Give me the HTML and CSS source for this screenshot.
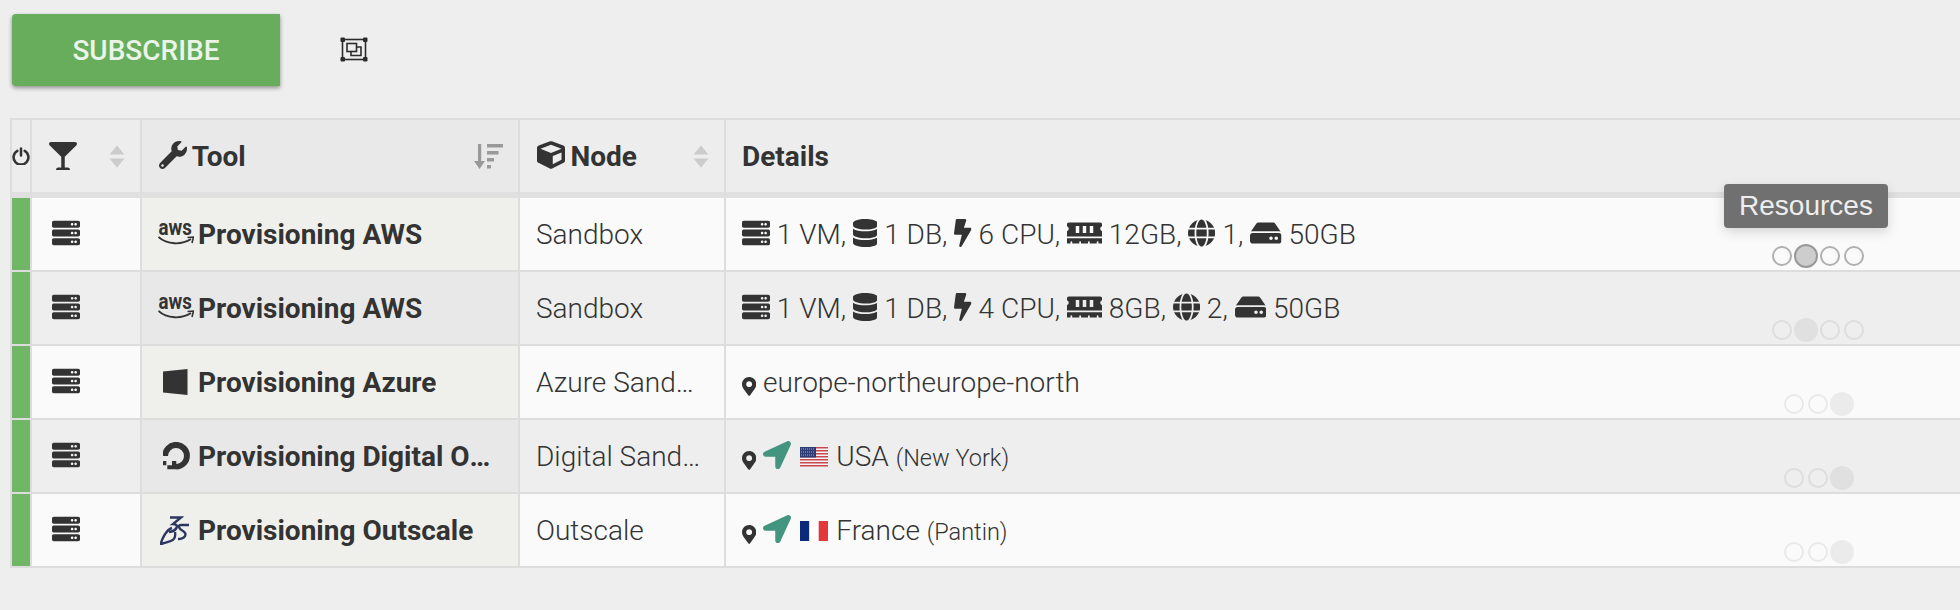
FILE: index.html
```html
<!DOCTYPE html>
<html lang="en">
<head>
<meta charset="UTF-8">
<meta name="viewport" content="width=device-width, initial-scale=1.0">
<title>Tools</title>
<link rel="stylesheet" href="styles.css">
</head>
<body>
<svg class="sprite" xmlns="http://www.w3.org/2000/svg">
    <symbol id="i-server" viewBox="0 0 512 512"><path d="M480 160H32c-17.673 0-32-14.327-32-32V64c0-17.673 14.327-32 32-32h448c17.673 0 32 14.327 32 32v64c0 17.673-14.327 32-32 32zm-48-88c-13.255 0-24 10.745-24 24s10.745 24 24 24 24-10.745 24-24-10.745-24-24-24zm-64 0c-13.255 0-24 10.745-24 24s10.745 24 24 24 24-10.745 24-24-10.745-24-24-24zm112 248H32c-17.673 0-32-14.327-32-32v-64c0-17.673 14.327-32 32-32h448c17.673 0 32 14.327 32 32v64c0 17.673-14.327 32-32 32zm-48-88c-13.255 0-24 10.745-24 24s10.745 24 24 24 24-10.745 24-24-10.745-24-24-24zm-64 0c-13.255 0-24 10.745-24 24s10.745 24 24 24 24-10.745 24-24-10.745-24-24-24zm112 248H32c-17.673 0-32-14.327-32-32v-64c0-17.673 14.327-32 32-32h448c17.673 0 32 14.327 32 32v64c0 17.673-14.327 32-32 32zm-48-88c-13.255 0-24 10.745-24 24s10.745 24 24 24 24-10.745 24-24-10.745-24-24-24zm-64 0c-13.255 0-24 10.745-24 24s10.745 24 24 24 24-10.745 24-24-10.745-24-24-24z"/></symbol>
    <symbol id="i-db" viewBox="0 0 448 512"><path d="M448 73.143v45.714C448 159.143 347.667 192 224 192S0 159.143 0 118.857V73.143C0 32.857 100.333 0 224 0s224 32.857 224 73.143zM448 176v102.857C448 319.143 347.667 352 224 352S0 319.143 0 278.857V176c48.125 33.143 136.208 48.572 224 48.572S399.874 209.143 448 176zm0 160v102.857C448 479.143 347.667 512 224 512S0 479.143 0 438.857V336c48.125 33.143 136.208 48.572 224 48.572S399.874 369.143 448 336z"/></symbol>
    <symbol id="i-bolt" viewBox="0 0 320 512"><path d="M296 160H180.6l42.6-129.8C227.2 15 215.7 0 200 0H56C44 0 33.8 8.9 32.2 20.8l-32 240C-1.7 275.2 9.5 288 24 288h118.7L96.6 482.5c-3.6 15.2 8 29.5 23.3 29.5 8.4 0 16.4-4.4 20.8-12l176-304c9.3-15.9-2.2-36-20.7-36z"/></symbol>
    <symbol id="i-memory" viewBox="0 0 640 512"><path d="M640 130.94V96c0-17.67-14.33-32-32-32H32C14.33 64 0 78.33 0 96v34.94c18.6 6.61 32 24.19 32 45.06s-13.4 38.45-32 45.06V320h640v-98.94c-18.6-6.61-32-24.19-32-45.06s13.4-38.45 32-45.06zM224 256h-64V128h64v128zm128 0h-64V128h64v128zm128 0h-64V128h64v128zM0 448h64v-26.67c0-8.84 7.16-16 16-16s16 7.16 16 16V448h128v-26.67c0-8.84 7.16-16 16-16s16 7.16 16 16V448h128v-26.67c0-8.84 7.16-16 16-16s16 7.16 16 16V448h128v-26.67c0-8.84 7.16-16 16-16s16 7.16 16 16V448h64v-96H0v96z"/></symbol>
    <symbol id="i-globe" viewBox="0 0 496 512"><path d="M336.5 160C322 70.7 287.8 8 248 8s-74 62.7-88.5 152h177zM152 256c0 22.2 1.2 43.5 3.3 64h185.3c2.1-20.5 3.3-41.8 3.3-64s-1.2-43.5-3.3-64H155.3c-2.1 20.5-3.3 41.8-3.3 64zm324.7-96c-28.6-67.9-86.5-120.4-158-141.6 24.4 33.8 41.2 84.7 50 141.6h108zM177.2 18.4C105.8 39.6 47.8 92.1 19.3 160h108c8.7-56.9 25.5-107.8 49.9-141.6zM487.4 192H372.7c2.1 21 3.3 42.5 3.3 64s-1.2 43-3.3 64h114.6c5.5-20.5 8.6-41.8 8.6-64s-3.1-43.5-8.5-64zM120 256c0-21.5 1.2-43 3.3-64H8.6C3.2 212.5 0 233.8 0 256s3.2 43.5 8.6 64h114.6c-2-21-3.2-42.5-3.2-64zm39.5 96c14.5 89.3 48.7 152 88.5 152s74-62.7 88.5-152h-177zm159.3 141.6c71.4-21.2 129.4-73.7 158-141.6h-108c-8.8 56.9-25.6 107.8-50 141.6zM19.3 352c28.6 67.9 86.5 120.4 158 141.6-24.4-33.8-41.2-84.7-50-141.6h-108z"/></symbol>
    <symbol id="i-hdd" viewBox="0 0 576 512"><path d="M576 304v96c0 26.51-21.49 48-48 48H48c-26.51 0-48-21.49-48-48v-96c0-26.51 21.49-48 48-48h480c26.51 0 48 21.49 48 48zm-48-80a79.557 79.557 0 0 1 30.777 6.165L462.25 85.374A48.003 48.003 0 0 0 422.311 64H153.689a48 48 0 0 0-39.938 21.374L17.223 230.165A79.557 79.557 0 0 1 48 224h480zm-48 96c-17.673 0-32 14.327-32 32s14.327 32 32 32 32-14.327 32-32-14.327-32-32-32zm-96 0c-17.673 0-32 14.327-32 32s14.327 32 32 32 32-14.327 32-32-14.327-32-32-32z"/></symbol>
    <symbol id="i-marker" viewBox="0 0 384 512"><path d="M172.268 501.67C26.97 291.031 0 269.413 0 192 0 85.961 85.961 0 192 0s192 85.961 192 192c0 77.413-26.97 99.031-172.268 309.67-9.535 13.774-29.93 13.773-39.464 0zM192 272c44.183 0 80-35.817 80-80s-35.817-80-80-80-80 35.817-80 80 35.817 80 80 80z"/></symbol>
    <symbol id="i-arrow" viewBox="0 0 512 512"><path d="M444.52 3.52L28.74 195.42c-47.97 22.39-31.98 92.75 19.19 92.75h175.91v175.91c0 51.17 70.36 67.17 92.75 19.19l191.9-415.78c15.99-38.39-25.59-79.97-63.97-63.97z"/></symbol>
    <symbol id="i-glass" viewBox="0 0 512 512"><path d="M502.05 57.6C523.3 36.34 508.25 0 478.2 0H33.8C3.75 0-11.3 36.34 9.95 57.6L224 271.64V464h-56c-22.09 0-40 17.91-40 40 0 4.42 3.58 8 8 8h240c4.42 0 8-3.58 8-8 0-22.09-17.91-40-40-40h-56V271.64L502.05 57.6z"/></symbol>
    <symbol id="i-wrench" viewBox="0 0 512 512"><path d="M507.73 109.1c-2.24-9.03-13.54-12.09-20.12-5.51l-74.36 74.36-67.88-11.31-11.31-67.88 74.36-74.36c6.62-6.62 3.43-17.9-5.66-20.16-47.38-11.74-99.55.91-136.58 37.93-39.64 39.64-50.55 97.1-34.05 147.2L18.74 402.76c-24.99 24.99-24.99 65.51 0 90.5 24.99 24.99 65.51 24.99 90.5 0l213.21-213.21c50.12 16.71 107.47 5.68 147.37-34.22 37.07-37.07 49.7-89.32 37.91-136.73zM64 472c-13.25 0-24-10.75-24-24 0-13.26 10.75-24 24-24s24 10.74 24 24c0 13.25-10.75 24-24 24z"/></symbol>
    <symbol id="i-cube" viewBox="0 0 512 512"><path d="M239.1 6.3l-208 78c-18.7 7-31.1 25-31.1 45v225.1c0 18.2 10.3 34.8 26.5 42.9l208 104c13.5 6.8 29.4 6.8 42.9 0l208-104c16.3-8.1 26.5-24.8 26.5-42.9V129.3c0-20-12.4-37.9-31.1-44.9l-208-78C262 2.2 250 2.2 239.1 6.3zM256 68.4l192 72v1.1l-192 78-192-78v-1.1l192-72zm32 356V275.5l160-65v133.9l-160 80z"/></symbol>
    <symbol id="i-sort" viewBox="0 0 16 23"><path d="M8 0.5 15.5 9.5H0.5zM8 22.5 0.5 13.5H15.5z" stroke-linejoin="round"/></symbol>
    <symbol id="i-sort-down" viewBox="0 0 29 25"><path d="M4 0h3.2v17H11L5.6 25 0 17h4zM13 0h16v3.4H13zM13 7h11.5v3.4H13zM13 14h7v3.4h-7zM13 21h4v3.4h-4z"/></symbol>
</svg>

<div class="toolbar">
    <button class="subscribe">Subscribe</button>
    <svg class="select-icon" viewBox="0 0 28 25" fill="none" stroke="#2b2b2b" stroke-width="1.6">
        <rect x="2.5" y="2.5" width="23" height="20"/>
        <rect x="7" y="6.5" width="9.5" height="8"/>
        <path d="M16.5 10H21V18.5H11V14.5"/>
        <g fill="#2b2b2b" stroke="none">
            <rect x="0.5" y="0.5" width="4.5" height="4.5" rx="1"/>
            <rect x="23" y="0.5" width="4.5" height="4.5" rx="1"/>
            <rect x="0.5" y="20" width="4.5" height="4.5" rx="1"/>
            <rect x="23" y="20" width="4.5" height="4.5" rx="1"/>
        </g>
    </svg>
</div>

<table class="tools">
    <colgroup>
        <col class="col-state">
        <col class="col-type">
        <col class="col-tool">
        <col class="col-node">
        <col>
    </colgroup>
    <thead>
        <tr>
            <th class="state-head">
                <svg class="power" viewBox="0 0 17 17" fill="none" stroke="#333" stroke-width="2.4" stroke-linecap="round"><path d="M5 3.6A7 7 0 1 0 12 3.6M8.5 1.4V8"/></svg>
            </th>
            <th>
                <div class="head-cell">
                    <svg class="fa"><use href="#i-glass"/></svg>
                    <svg class="sort"><use href="#i-sort"/></svg>
                </div>
            </th>
            <th class="sorted">
                <div class="head-cell">
                    <span class="head-label"><svg class="fa"><use href="#i-wrench"/></svg> Tool</span>
                    <svg class="sort-active"><use href="#i-sort-down"/></svg>
                </div>
            </th>
            <th>
                <div class="head-cell">
                    <span class="head-label"><svg class="fa"><use href="#i-cube"/></svg> Node</span>
                    <svg class="sort"><use href="#i-sort"/></svg>
                </div>
            </th>
            <th class="details-head">Details</th>
        </tr>
    </thead>
    <tbody>
        <tr>
            <td class="state"></td>
            <td class="type"><svg class="fa"><use href="#i-server"/></svg></td>
            <td class="tool">
                <div class="tool-cell">
                    <span class="logo">
                        <svg class="logo-aws" viewBox="0 -9 36 42"><text transform="translate(0.5 13) scale(0.85 1)">aws</text><path d="M0.5 15C9 23 24 23 33 17" fill="none" stroke="#333" stroke-width="1.8"/><path d="M29.5 15.5 35.5 15 34 21" fill="none" stroke="#333" stroke-width="1.6"/></svg>
                    </span>
                    <span class="tool-name">Provisioning AWS</span>
                </div>
            </td>
            <td class="node"><div class="clip">Sandbox</div></td>
            <td class="details">
                <div class="details-row">
                    <div class="details-text"><svg class="fa"><use href="#i-server"/></svg> 1 VM, <svg class="fa fa-db"><use href="#i-db"/></svg> 1 DB, <svg class="fa fa-bolt"><use href="#i-bolt"/></svg> 6 CPU, <svg class="fa fa-memory"><use href="#i-memory"/></svg> 12GB, <svg class="fa fa-globe"><use href="#i-globe"/></svg> 1, <svg class="fa fa-hdd"><use href="#i-hdd"/></svg> 50GB</div>
                    <div class="dots dots-on">
                        <span class="slot"><i class="dot"></i></span>
                        <span class="slot slot-tip"><i class="dot dot-active"></i><span class="tooltip">Resources</span></span>
                        <span class="slot"><i class="dot"></i></span>
                        <span class="slot"><i class="dot"></i></span>
                    </div>
                </div>
            </td>
        </tr>
        <tr>
            <td class="state"></td>
            <td class="type"><svg class="fa"><use href="#i-server"/></svg></td>
            <td class="tool">
                <div class="tool-cell">
                    <span class="logo">
                        <svg class="logo-aws" viewBox="0 -9 36 42"><text transform="translate(0.5 13) scale(0.85 1)">aws</text><path d="M0.5 15C9 23 24 23 33 17" fill="none" stroke="#333" stroke-width="1.8"/><path d="M29.5 15.5 35.5 15 34 21" fill="none" stroke="#333" stroke-width="1.6"/></svg>
                    </span>
                    <span class="tool-name">Provisioning AWS</span>
                </div>
            </td>
            <td class="node"><div class="clip">Sandbox</div></td>
            <td class="details">
                <div class="details-row">
                    <div class="details-text"><svg class="fa"><use href="#i-server"/></svg> 1 VM, <svg class="fa fa-db"><use href="#i-db"/></svg> 1 DB, <svg class="fa fa-bolt"><use href="#i-bolt"/></svg> 4 CPU, <svg class="fa fa-memory"><use href="#i-memory"/></svg> 8GB, <svg class="fa fa-globe"><use href="#i-globe"/></svg> 2, <svg class="fa fa-hdd"><use href="#i-hdd"/></svg> 50GB</div>
                    <div class="dots">
                        <span class="slot"><i class="dot"></i></span>
                        <span class="slot"><i class="dot dot-active"></i></span>
                        <span class="slot"><i class="dot"></i></span>
                        <span class="slot"><i class="dot"></i></span>
                    </div>
                </div>
            </td>
        </tr>
        <tr>
            <td class="state"></td>
            <td class="type"><svg class="fa"><use href="#i-server"/></svg></td>
            <td class="tool">
                <div class="tool-cell">
                    <span class="logo">
                        <svg class="logo-img" viewBox="1 0 28 28"><path d="M0 3.5 25.5 1V27L0 24.5z" fill="#333"/></svg>
                    </span>
                    <span class="tool-name">Provisioning Azure</span>
                </div>
            </td>
            <td class="node"><div class="clip">Azure Sandbox</div></td>
            <td class="details">
                <div class="details-row">
                    <div class="details-text"><svg class="fa-pin"><use href="#i-marker"/></svg> europe-northeurope-north</div>
                    <div class="dots">
                        <span class="slot"><i class="dot"></i></span>
                        <span class="slot"><i class="dot"></i></span>
                        <span class="slot"><i class="dot dot-active"></i></span>
                    </div>
                </div>
            </td>
        </tr>
        <tr>
            <td class="state"></td>
            <td class="type"><svg class="fa"><use href="#i-server"/></svg></td>
            <td class="tool">
                <div class="tool-cell">
                    <span class="logo">
                        <svg class="logo-img" viewBox="1 0 28 28"><path d="M14.3 27.5V22A8 8 0 1 0 6 14H0.3A13.8 13.8 0 1 1 14.3 27.5zM10 19H14.3V27.3H10zM5.3 23.3H10V27.3H5.3zM0 19H4.3V23.3H0z" fill="#333"/></svg>
                    </span>
                    <span class="tool-name">Provisioning Digital Ocean</span>
                </div>
            </td>
            <td class="node"><div class="clip">Digital Sandbox</div></td>
            <td class="details">
                <div class="details-row">
                    <div class="details-text"><svg class="fa-pin"><use href="#i-marker"/></svg> <svg class="fa fa-arrow"><use href="#i-arrow"/></svg> <svg class="flag" viewBox="0 0 28 20"><rect width="28" height="20" fill="#f4f4f4"/><path d="M0 0h28v1.5H0zM0 3h28v1.5H0zM0 6h28v1.5H0zM0 9h28v1.5H0zM0 12h28v1.5H0zM0 15h28v1.5H0zM0 18h28v1.5H0z" fill="#c8474f"/><rect width="16" height="10.5" fill="#2f3b74"/><path d="M1 2h14M1 5h14M1 8h14" stroke="#aab" stroke-width="1" stroke-dasharray="1 1"/></svg> USA <small>(New York)</small></div>
                    <div class="dots">
                        <span class="slot"><i class="dot"></i></span>
                        <span class="slot"><i class="dot"></i></span>
                        <span class="slot"><i class="dot dot-active"></i></span>
                    </div>
                </div>
            </td>
        </tr>
        <tr>
            <td class="state"></td>
            <td class="type"><svg class="fa"><use href="#i-server"/></svg></td>
            <td class="tool">
                <div class="tool-cell">
                    <span class="logo">
                        <svg class="logo-3ds" viewBox="0 0 30 30" fill="none" stroke="#2c3660" stroke-width="2.4"><path d="M10 2.5H21L13 9C20 9 17 16 9 17"/><path d="M29 10H21C17 10 19 14 23 16 28 19 25 24 18 24"/><path d="M12 13C6 15 2 24 0.5 29.5 7 26 17 28 15 17"/></svg>
                    </span>
                    <span class="tool-name">Provisioning Outscale</span>
                </div>
            </td>
            <td class="node"><div class="clip">Outscale</div></td>
            <td class="details">
                <div class="details-row">
                    <div class="details-text"><svg class="fa-pin"><use href="#i-marker"/></svg> <svg class="fa fa-arrow"><use href="#i-arrow"/></svg> <svg class="flag" viewBox="0 0 28 20"><rect width="9.4" height="20" fill="#0b2a7c"/><rect x="9.4" width="9.3" height="20" fill="#fff"/><rect x="18.7" width="9.3" height="20" fill="#e3373c"/></svg> France <small>(Pantin)</small></div>
                    <div class="dots">
                        <span class="slot"><i class="dot"></i></span>
                        <span class="slot"><i class="dot"></i></span>
                        <span class="slot"><i class="dot dot-active"></i></span>
                    </div>
                </div>
            </td>
        </tr>
    </tbody>
</table>
</body>
</html>
```

FILE: styles.css
```css
html {
    overflow: hidden;
}
body {
    margin: 0;
    padding: 14px 0 0 0;
    background-color: #eeeeee;
    color: #333;
    font-family: Roboto, "Liberation Sans", sans-serif;
    font-size: 28px;
    overflow: hidden;
}
.sprite {
    display: none;
}
.toolbar {
    display: flex;
    align-items: center;
    height: 72px;
    margin-left: 12px;
    margin-bottom: 32px;
}
.subscribe {
    width: 268px;
    height: 72px;
    margin-right: 60px;
    border: none;
    border-radius: 4px 0 0 4px;
    background-color: #67ad5b;
    box-shadow: 0 2px 4px rgba(0, 0, 0, 0.4);
    color: #eaf4e8;
    font-family: Roboto, sans-serif;
    font-size: 28px;
    font-weight: 500;
    text-transform: uppercase;
}
.select-icon {
    width: 28px;
    height: 25px;
    margin-top: -1px;
}
.tools {
    width: 1960px;
    margin-left: 10px;
    border-collapse: separate;
    border-spacing: 0;
    border-top: 2px solid #ddd;
    border-left: 2px solid #ddd;
    table-layout: fixed;
}
.col-state { width: 20px; }
.col-type { width: 110px; }
.col-tool { width: 378px; }
.col-node { width: 206px; }
th {
    box-sizing: border-box;
    height: 78px;
    padding: 0 15px 0 17px;
    border-right: 2px solid #ddd;
    border-bottom: 6px solid #e0e0e0;
    background-color: #ededed;
    font-weight: 700;
    text-align: left;
}
th.sorted {
    background-color: #e9e9e9;
}
th.state-head {
    padding: 0;
    text-align: right;
}
th.details-head {
    padding-left: 16px;
    border-right: none;
}
.head-cell {
    display: flex;
    justify-content: space-between;
    align-items: center;
}
.head-label {
    word-spacing: -1.5px;
}
.power {
    display: block;
    width: 18px;
    height: 18px;
}
.fa {
    width: 1em;
    height: 1em;
    fill: #333;
    vertical-align: -0.14em;
}
.fa-db { width: 0.875em; }
.fa-bolt { width: 0.625em; }
.fa-memory { width: 1.25em; }
.fa-globe { width: 0.97em; }
.fa-hdd { width: 1.125em; }
.fa-arrow { fill: #44957f; }
.fa-pin {
    width: 14.3px;
    height: 19px;
    fill: #333;
    vertical-align: -0.17em;
}
.sort {
    width: 16px;
    height: 23px;
    fill: #ccc;
}
.sort-active {
    width: 29px;
    height: 25px;
    fill: #999;
}
.flag {
    width: 28px;
    height: 20px;
    margin: 0 1px 0 2.5px;
    vertical-align: -1px;
}
td {
    box-sizing: border-box;
    height: 74px;
    padding: 0 15px 0 16px;
    border-right: 2px solid #ddd;
    border-bottom: 2px solid #ddd;
    background-color: #fafafa;
    font-weight: 300;
}
tbody tr:nth-child(even) td {
    background-color: #eeeeee;
}
td.state,
tbody tr:nth-child(even) td.state {
    padding: 0;
    background-color: #70b765;
}
td.type {
    padding: 0 0 0 20px;
}
td.tool {
    padding: 0 17px 0 17px;
    background-color: #eff0eb;
    font-weight: 700;
}
tbody tr:nth-child(even) td.tool {
    background-color: #e8e8e8;
}
.tool-cell {
    display: flex;
    align-items: center;
}
.logo {
    display: flex;
    flex: none;
    justify-content: center;
    align-items: center;
    width: 36px;
    margin-right: 3px;
}
.logo-aws {
    flex: none;
    width: 36px;
    height: 42px;
    margin-left: -2px;
}
.logo-aws text {
    fill: #333;
    font-family: Roboto, sans-serif;
    font-size: 22px;
    font-weight: 700;
}
.logo-img {
    flex: none;
    width: 28px;
    height: 28px;
}
.logo-3ds {
    flex: none;
    width: 30px;
    height: 30px;
    margin-left: -4px;
}
.tool-name,
.clip {
    overflow: hidden;
    white-space: nowrap;
    text-overflow: ellipsis;
}
td.details {
    padding: 0;
    border-right: none;
}
.details-row {
    display: flex;
    justify-content: space-between;
    height: 72px;
}
.details-text {
    align-self: center;
    padding-left: 16px;
    white-space: nowrap;
}
.details-text small {
    font-size: 23.5px;
}
.dots {
    display: flex;
    justify-content: center;
    align-self: flex-end;
    width: 120px;
    margin-right: 92px;
    padding-bottom: 2px;
}
.slot {
    display: flex;
    position: relative;
    justify-content: center;
    align-items: center;
    width: 24px;
    height: 24px;
}
.dot {
    box-sizing: border-box;
    width: 20px;
    height: 20px;
    border: 2px solid rgba(0, 0, 0, 0.07);
    border-radius: 50%;
}
.dot-active {
    width: 24px;
    height: 24px;
    border-color: transparent;
    background-color: rgba(0, 0, 0, 0.06);
}
.dots-on .dot {
    border-color: #b0b0b0;
}
.dots-on .dot-active {
    border-color: #999;
    background-color: #cdcdcd;
}
.tooltip {
    position: absolute;
    bottom: 40px;
    left: 50%;
    z-index: 2;
    width: 164px;
    height: 44px;
    transform: translateX(-50%);
    border-radius: 4px;
    background-color: #707070;
    box-shadow: 0 4px 12px rgba(0, 0, 0, 0.15);
    color: #eee;
    font-family: "Liberation Sans", sans-serif;
    font-size: 28px;
    font-weight: 400;
    line-height: 44px;
    text-align: center;
}
```
